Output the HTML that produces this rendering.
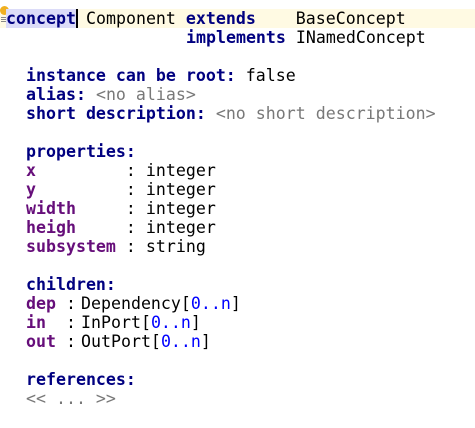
<!DOCTYPE html>
<html><head><style>
html,body{margin:0;padding:0;background:#fff;width:475px;height:428px;overflow:hidden}
body{font-family:"DejaVu Sans Mono","Liberation Mono",monospace;font-size:16.6px;color:#000;position:relative}
.l{position:absolute;left:0;height:19px;line-height:19px;white-space:pre}
.k{color:#000080;font-weight:bold}
.p{color:#660e7a;font-weight:bold}
.g{color:#787878}
.b{color:#0000ff}
.hl{position:absolute;left:0;top:9px;width:475px;height:19px;background:#fffae3}
.sel{background:#dcdcf8}
</style></head><body>
<div class="hl"></div>
<div style="position:absolute;left:76px;top:9px;width:2px;height:19px;background:#000"></div>
<div style="position:absolute;left:0;top:6px;width:9px;height:9px;border-radius:50%;background:#f0b020"></div>
<div style="position:absolute;left:1px;top:17px;width:6px;height:1px;background:#888;box-shadow:0 2px 0 #888,0 4px 0 #888"></div>
<div class="l" style="top:9px;left:6px"><span class="k sel">concept</span></div>
<div class="l" style="top:9px;left:86px">Component <span class="k">extends</span>    BaseConcept</div>
<div class="l" style="top:28px;left:186px"><span class="k">implements</span> INamedConcept</div>
<div class="l" style="top:66px;left:26px"><span class="k">instance can be root:</span> false</div>
<div class="l" style="top:85px;left:26px"><span class="k">alias:</span> <span class="g">&lt;no alias&gt;</span></div>
<div class="l" style="top:104px;left:26px"><span class="k">short description:</span> <span class="g">&lt;no short description&gt;</span></div>
<div class="l" style="top:142px;left:26px"><span class="k">properties:</span></div>
<div class="l" style="top:161px;left:26px"><span class="p">x</span>         : integer</div>
<div class="l" style="top:180px;left:26px"><span class="p">y</span>         : integer</div>
<div class="l" style="top:199px;left:26px"><span class="p">width</span>     : integer</div>
<div class="l" style="top:218px;left:26px"><span class="p">heigh</span>     : integer</div>
<div class="l" style="top:237px;left:26px"><span class="p">subsystem</span> : string</div>
<div class="l" style="top:275px;left:26px"><span class="k">children:</span></div>
<div class="l" style="top:294px;left:26px"><span class="p">dep</span></div>
<div class="l" style="top:294px;left:66px">:</div>
<div class="l" style="top:294px;left:81px">Dependency[<span class="b">0..n</span>]</div>
<div class="l" style="top:313px;left:26px"><span class="p">in</span></div>
<div class="l" style="top:313px;left:66px">:</div>
<div class="l" style="top:313px;left:81px">InPort[<span class="b">0..n</span>]</div>
<div class="l" style="top:332px;left:26px"><span class="p">out</span></div>
<div class="l" style="top:332px;left:66px">:</div>
<div class="l" style="top:332px;left:81px">OutPort[<span class="b">0..n</span>]</div>
<div class="l" style="top:370px;left:26px"><span class="k">references:</span></div>
<div class="l" style="top:389px;left:26px"><span class="g">&lt;&lt; ... &gt;&gt;</span></div>
</body></html>
